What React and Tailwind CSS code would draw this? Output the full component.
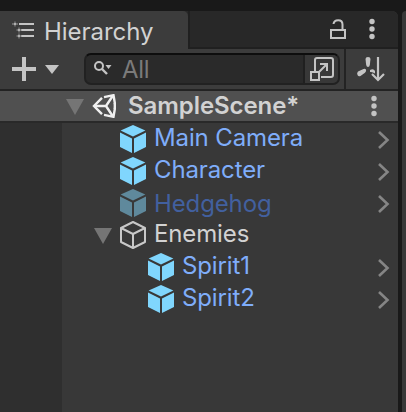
function Cube({ solid = true, dim = false }) {
  const fill = dim ? "#5f899c" : "#80d6fd";
  return (
    <svg width="28" height="30" viewBox="0 0 28 30" className="block shrink-0">
      {solid ? (
        <g fill={fill}>
          <path d="M14 1 26.4 6.6 14 12.4 1.6 6.6Z" />
          <path d="M1 8.6 13 14.4V29L1 23Z" />
          <path d="M27 8.6 15 14.4V29L27 23Z" />
        </g>
      ) : (
        <g fill="none" stroke="#c8c8c8" strokeWidth="2" strokeLinejoin="round">
          <path d="M14 2 26 8V22L14 28 2 22V8Z" />
          <path d="M2 8 14 14 26 8M14 14V28" />
        </g>
      )}
    </svg>
  );
}

function Chevron() {
  return (
    <svg width="14" height="20" viewBox="0 0 14 20" className="mt-0.5 mr-[7px] block shrink-0">
      <path d="M2 2 10.5 10 2 18" fill="none" stroke="#858585" strokeWidth="2.6" />
    </svg>
  );
}

function Foldout() {
  return (
    <svg width="18" height="18" viewBox="0 0 18 18" className="block shrink-0">
      <path d="M0 2H18L9 18Z" fill="#757575" />
    </svg>
  );
}

function Dots() {
  return (
    <svg width="8" height="22" viewBox="0 0 8 22" fill="#c4c4c4" className="block shrink-0">
      <circle cx="4" cy="3.5" r="2.7" />
      <circle cx="4" cy="11" r="2.7" />
      <circle cx="4" cy="18.5" r="2.7" />
    </svg>
  );
}

function Row({ name, child, dim, chevron = true, solid = true }) {
  return (
    <div className="flex h-8 items-center">
      <div className={child ? "w-[85px]" : "flex w-[57px] justify-end pr-[7px]"}>
        {!solid && <Foldout />}
      </div>
      <Cube solid={solid} dim={dim} />
      <span
        className={`ml-[7px] grow whitespace-nowrap ${dim ? "pt-[2px] text-[#42609f]" : solid ? "pb-[2px] text-[#7fadfa]" : "pb-[2px] text-[#d2d2d2]"}`}
      >
        {name}
      </span>
      {chevron && <Chevron />}
    </div>
  );
}

export default function App() {
  return (
    <div className="flex h-[412px] w-[406px] justify-between overflow-hidden bg-[#191919] pt-[11px] font-['Inter',sans-serif] text-[24px] leading-8">
      <section className="flex w-[398px] flex-col overflow-hidden rounded-tr-[6px] bg-[#383838]">
        <header className="flex h-[38px] shrink-0 bg-[#282828]">
          <div className="flex h-[38px] w-[188px] items-center rounded-tr-[5px] bg-[#3c3c3c] pt-[3px] pl-[12px] text-[#d2d2d2]">
            <svg width="23" height="18" viewBox="0 0 23 18" className="mt-[-3px] block shrink-0">
              <path d="M7 3H22M9 9H22M9 15H22" stroke="#c4c4c4" strokeWidth="2" />
              <path d="M0 3H6M3 0.5V5.5M4.5 9H9.5M7 6.5V11.5M4.5 15H9.5M7 12.5V17.5" stroke="#7d7d7d" strokeWidth="1.4" />
              <path d="M2 2H4V4H2ZM6 8H8V10H6ZM6 14H8V16H6Z" fill="#b0b0b0" />
            </svg>
            <span className="ml-[9px] tracking-[-0.05px]">Hierarchy</span>
          </div>
          <div className="flex grow items-center justify-end border-b-2 border-l-2 border-[#202020] pr-[22px]">
            <svg width="18" height="22" viewBox="0 0 18 22" className="mr-[21px] block" fill="none" stroke="#c4c4c4" strokeWidth="2">
              <rect x="2" y="12" width="14" height="8" />
              <path d="M4.5 6C5 1 13.5 0.5 13.5 6.5V12" />
            </svg>
            <Dots />
          </div>
        </header>
        <div className="flex h-[42px] shrink-0 items-center border-b-2 border-[#232323] bg-[#3c3c3c]">
          <svg width="50" height="26" viewBox="0 0 50 26" className="ml-[12px] block shrink-0" fill="#c4c4c4">
            <path d="M10 1H14V11H24V15H14V25H10V15H0V11H10Z" />
            <path d="M33 9H47L40 18Z" />
          </svg>
          <div className="ml-[22px] flex h-8 w-[256px] shrink-0 items-center overflow-hidden rounded-[7px] border-2 border-[#212121] border-t-[#0d0d0d] bg-[#2a2a2a]">
            <svg width="20" height="18" viewBox="0 0 20 18" className="ml-[7px] block shrink-0">
              <circle cx="6" cy="6" r="4" fill="none" stroke="#c4c4c4" strokeWidth="2" />
              <path d="M9 9 14 14" stroke="#c4c4c4" strokeWidth="2.4" />
              <path d="M12.5 5H18.5L15.5 9Z" fill="#c4c4c4" />
            </svg>
            <span className="ml-[9px] grow pt-[2px] tracking-[-0.3px] text-[#7b7b7b]">All</span>
            <div className="flex h-7 w-[35px] items-center justify-center border-l-2 border-[#202020] bg-[#383838]">
              <svg width="26" height="26" viewBox="0 0 26 26" fill="none" stroke="#c4c4c4" strokeWidth="2">
                <path d="M6 15V4Q6 2 8 2H22Q24 2 24 4V19Q24 21 22 21H12" />
                <rect x="2" y="16" width="8" height="8" />
                <path d="M9 17 18 8M11 8H18V15" />
              </svg>
            </div>
          </div>
          <div className="ml-[4px] flex h-10 grow items-center border-l-2 border-[#232323] pl-[10px]">
            <svg width="30" height="26" viewBox="0 0 30 26" className="block" fill="#c4c4c4">
              <path d="M9.5 3Q9.5 1 12 1T14.5 3L13.8 9Q13.5 11 12 11T10.2 9Z" />
              <path d="M9.8 13.2Q11 15.5 9 16.8L4.5 20Q2.5 21 1.5 19T2 15.5L7.5 13Q9 12.3 9.8 13.2Z" />
              <path d="M14 14Q17.5 12 19 15V17.5Q16.5 15.5 14 16Z" />
              <path d="M22 1V23.5M16 18 22 24 28 18" fill="none" stroke="#c4c4c4" strokeWidth="2.2" />
            </svg>
          </div>
        </div>
        <div className="flex h-8 shrink-0 items-center border-b-2 border-[#292929] bg-[#505050] pr-5 pl-[66px] font-semibold text-[#d2d2d2]">
          <Foldout />
          <svg width="24" height="24" viewBox="0 0 24 24" className="ml-[8px] block shrink-0" fill="none" stroke="#f0f0f0" strokeWidth="2.4">
            <path d="M12 3.2 21.5 1.2 23 10M23 14 21.5 22.8 12 20.8M10 3.8 2 12 10 20.2" />
            <path d="M2 12H14L21 1.5M14 12 21 22.5M22.8 9V15" />
          </svg>
          <span className="ml-[12px] grow tracking-[-0.07px]">SampleScene*</span>
          <Dots />
        </div>
        <div className="flex grow tracking-[-0.13px]">
          <div className="w-[62px] shrink-0 bg-[#2f2f2f]" />
          <div className="grow">
            <Row name="Main Camera" />
            <Row name="Character" />
            <Row name="Hedgehog" dim />
            <Row name="Enemies" solid={false} chevron={false} />
            <Row name="Spirit1" child />
            <Row name="Spirit2" child />
          </div>
        </div>
      </section>
      <div className="w-[4px] rounded-tl-[5px] bg-[#383838]" />
    </div>
  );
}
